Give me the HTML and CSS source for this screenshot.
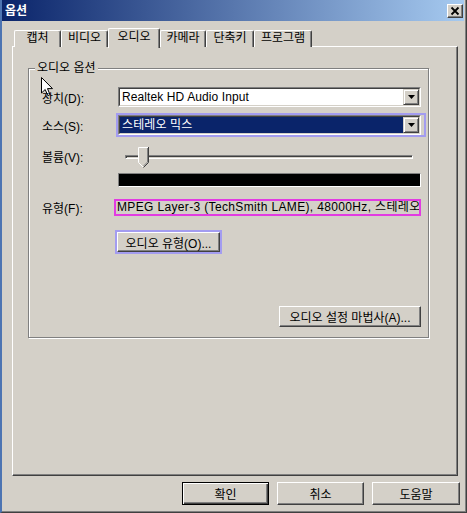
FILE: index.html
```html
<!DOCTYPE html>
<html lang="ko">
<head>
<meta charset="utf-8">
<title>옵션</title>
<link rel="stylesheet" href="styles.css">
</head>
<body>
<div class="frame">
  <div class="inner">
    <div class="titlebar">
      <span class="title">옵션</span>
      <span class="close-btn">
        <svg width="14" height="12" viewBox="0 0 14 12"><path d="M3.5 2.5 L10.5 9.5 M10.5 2.5 L3.5 9.5" stroke="#000" stroke-width="1.8"/></svg>
      </span>
    </div>
    <div class="content">
      <div class="tabs">
        <div class="tab t1">캡처</div>
        <div class="tab t2">비디오</div>
        <div class="tab t3 active">오디오</div>
        <div class="tab t4">카메라</div>
        <div class="tab t5">단축키</div>
        <div class="tab t6">프로그램</div>
      </div>
      <div class="panel">
        <div class="group">
          <div class="legend">오디오 옵션</div>
          <div class="row row-device">
            <span class="label">장치(D):</span>
            <div class="combo">
              <div class="combo-in">
                <span class="combo-text">Realtek HD Audio Input</span>
                <span class="drop"><svg width="7" height="4" viewBox="0 0 7 4"><polygon points="0,0 7,0 3.5,4" fill="#000"/></svg></span>
              </div>
            </div>
          </div>
          <div class="row row-source">
            <span class="label">소스(S):</span>
            <div class="combo ring">
              <div class="combo-in">
                <span class="combo-text selected">스테레오 믹스</span>
                <span class="drop"><svg width="7" height="4" viewBox="0 0 7 4"><polygon points="0,0 7,0 3.5,4" fill="#000"/></svg></span>
              </div>
            </div>
          </div>
          <div class="row row-volume">
            <span class="label">볼륨(V):</span>
            <div class="slider">
              <div class="track"></div>
              <svg class="thumb" width="11" height="21" viewBox="0 0 11 21">
                <polygon points="0,0 11,0 11,15.5 5.5,21 0,15.5" fill="#d4d0c8"/>
                <path d="M0.5 15.5 V0.5 H10" stroke="#fff" fill="none"/>
                <path d="M0.5 15.5 L5 20" stroke="#fff" fill="none"/>
                <path d="M10.5 0 V15.5 L5.5 20.5" stroke="#404040" fill="none"/>
                <path d="M9.5 1 V15 L5.5 19" stroke="#808080" fill="none"/>
              </svg>
            </div>
          </div>
          <div class="row row-meter">
            <span class="label"></span>
            <div class="meter"></div>
          </div>
          <div class="row row-type">
            <span class="label">유형(F):</span>
            <div class="type-box">MPEG Layer-3 (TechSmith LAME), 48000Hz, 스테레오</div>
          </div>
          <div class="row row-typebtn">
            <span class="label"></span>
            <button class="btn btn-type">오디오 유형(O)...</button>
          </div>
          <div class="row row-wizard">
            <button class="btn btn-wizard">오디오 설정 마법사(A)...</button>
          </div>
        </div>
      </div>
      <div class="buttons">
        <button class="btn btn-dlg default">확인</button>
        <button class="btn btn-dlg">취소</button>
        <button class="btn btn-dlg wide">도움말</button>
      </div>
    </div>
  </div>
  <svg class="cursor" width="13" height="20" viewBox="0 0 13 20">
    <path d="M0.5 0.5 V16 L4.2 12.5 L6.8 18.6 L9 17.7 L6.5 11.6 L11.5 11.6 Z" fill="#fff" stroke="#000" stroke-width="1"/>
  </svg>
</div>
</body>
</html>
```

FILE: styles.css
```css
* { box-sizing: border-box; }

html, body {
  margin: 0;
  padding: 0;
}

body {
  width: 467px;
  height: 513px;
  overflow: hidden;
  background: #d4d0c8;
  font-family: "Liberation Sans", "Noto Sans CJK KR", sans-serif;
  font-size: 12px;
  color: #000;
}

.frame {
  position: relative;
  width: 467px;
  height: 513px;
  border-left: 2px solid #4d74b2;
  border-right: 1px solid #404040;
  border-bottom: 1px solid #404040;
  background: #d4d0c8;
}

.inner {
  height: 512px;
  padding-right: 1px;
  padding-bottom: 1px;
  border-right: 1px solid #808080;
  border-bottom: 1px solid #808080;
  display: flex;
  flex-direction: column;
}

.titlebar {
  height: 21px;
  flex: none;
  display: flex;
  align-items: center;
  justify-content: space-between;
  background: linear-gradient(to right, #0a246a, #a6caf0);
  padding: 0 1px 0 3px;
}

.title {
  color: #fff;
  font-weight: bold;
  font-size: 12px;
  line-height: 14px;
}

.close-btn {
  width: 16px;
  height: 14px;
  margin-top: 1px;
  display: flex;
  align-items: center;
  justify-content: center;
  background: #d4d0c8;
  border: 1px solid;
  border-color: #fff #404040 #404040 #fff;
  box-shadow: inset -1px -1px #808080;
}

.content {
  flex: 1;
  display: flex;
  flex-direction: column;
  padding-top: 8px;
}

/* Tabs */
.tabs {
  height: 18px;
  display: flex;
  align-items: flex-end;
  margin-left: 12px;
  position: relative;
  z-index: 2;
  margin-bottom: -1px;
}

.tab {
  height: 17px;
  line-height: 15px;
  text-align: center;
  background: #d4d0c8;
  border-top: 1px solid #fff;
  border-left: 1px solid #fff;
  border-right: 1px solid #404040;
  box-shadow: inset -1px 0 #808080;
  border-radius: 2px 2px 0 0;
  white-space: nowrap;
}

.tab.active {
  height: 20px;
  line-height: 16px;
  margin-bottom: -1px;
  padding-bottom: 2px;
}

.t1 { width: 47px; }
.t2 { width: 47px; }
.t3 { width: 52px; }
.t4 { width: 46px; }
.t5 { width: 48px; }
.t6 { width: 58px; }

/* Panel */
.panel {
  position: relative;
  z-index: 1;
  margin-left: 10px;
  width: 446px;
  height: 430px;
  flex: none;
  border: 1px solid;
  border-color: #fff #404040 #404040 #fff;
  box-shadow: inset -1px -1px #808080;
  padding-top: 21px;
  padding-left: 15px;
}

.group {
  width: 401px;
  border: 1px solid #808080;
  box-shadow: inset 1px 1px #fff, 1px 1px #fff;
  padding: 0 7px 10px 13px;
}

.legend {
  width: max-content;
  margin: -8px 0 0 -7px;
  padding: 0 2px;
  height: 14px;
  line-height: 14px;
  background: #d4d0c8;
}

.row {
  display: flex;
  align-items: center;
}

.label {
  width: 76px;
  flex: none;
  white-space: nowrap;
}

.row-device { margin-top: 12px; height: 20px; }
.row-source { margin-top: 8px; height: 20px; }
.row-volume { margin-top: 12px; height: 21px; align-items: flex-start; }
.row-volume .label { line-height: 22px; }
.row-meter { margin-top: 5px; height: 14px; }
.row-type { margin-top: 12px; height: 17px; }
.row-typebtn { margin-top: 16px; height: 20px; }
.row-wizard { margin-top: 54px; height: 21px; justify-content: flex-end; }

/* Combo */
.combo {
  position: relative;
  width: 303px;
  height: 20px;
  border: 1px solid;
  border-color: #808080 #fff #fff #808080;
}

.combo-in {
  height: 100%;
  display: flex;
  border: 1px solid;
  border-color: #404040 #d4d0c8 #d4d0c8 #404040;
  background: #fff;
}

.combo-text {
  flex: 1;
  padding-left: 2px;
  line-height: 16px;
  white-space: nowrap;
  overflow: hidden;
  letter-spacing: 0.1px;
}

.combo-text.selected {
  background: #0a246a;
  color: #fff;
}

.drop {
  width: 16px;
  height: 16px;
  flex: none;
  display: flex;
  align-items: center;
  justify-content: center;
  background: #d4d0c8;
  border: 1px solid;
  border-color: #d4d0c8 #404040 #404040 #d4d0c8;
  box-shadow: inset 1px 1px #fff, inset -1px -1px #808080;
}

.ring::after {
  content: "";
  position: absolute;
  top: -3px;
  left: -3px;
  right: -6px;
  bottom: -3px;
  border: 2px solid #a39cf0;
  filter: blur(0.4px);
  pointer-events: none;
}

/* Slider */
.slider {
  position: relative;
  width: 303px;
  height: 21px;
  padding: 8px 8px 0 7px;
}

.track {
  height: 4px;
  border: 1px solid;
  border-color: #808080 #fff #fff #808080;
  box-shadow: inset 1px 1px #404040;
}

.thumb {
  position: absolute;
  top: 0;
  left: 20px;
}

/* Meter */
.meter {
  width: 303px;
  height: 14px;
  background: #000;
  border: 1px solid;
  border-color: #808080 #fff #fff #808080;
}

/* Type box */
.type-box {
  margin-left: -4px;
  width: 313px;
  height: 17px;
  line-height: 13px;
  border: 2px solid #e23be2;
  padding-left: 1px;
  white-space: nowrap;
  overflow: hidden;
  letter-spacing: 0.35px;
}

/* Buttons */
.btn {
  font-family: inherit;
  font-size: 12px;
  color: #000;
  background: #d4d0c8;
  border: 1px solid;
  border-color: #fff #404040 #404040 #fff;
  box-shadow: inset -1px -1px #808080;
  padding: 0;
  margin: 0;
  text-align: center;
  white-space: nowrap;
}

.btn-type {
  width: 103px;
  height: 20px;
  margin-left: -1px;
  box-shadow: inset -1px -1px #808080, 0 0 0 2px #a39cf0;
}

.btn-wizard {
  width: 142px;
  height: 21px;
}

.buttons {
  margin-top: 6px;
  height: 23px;
  display: flex;
  justify-content: flex-end;
  gap: 8px;
  padding-right: 4px;
}

.btn-dlg {
  width: 87px;
  height: 23px;
}

.btn-dlg.wide { width: 88px; }

.btn-dlg.default {
  border: 1px solid #000;
  box-shadow: inset 1px 1px #fff, inset -1px -1px #404040, inset -2px -2px #808080;
}

.cursor {
  position: absolute;
  left: 39px;
  top: 77px;
}
```
